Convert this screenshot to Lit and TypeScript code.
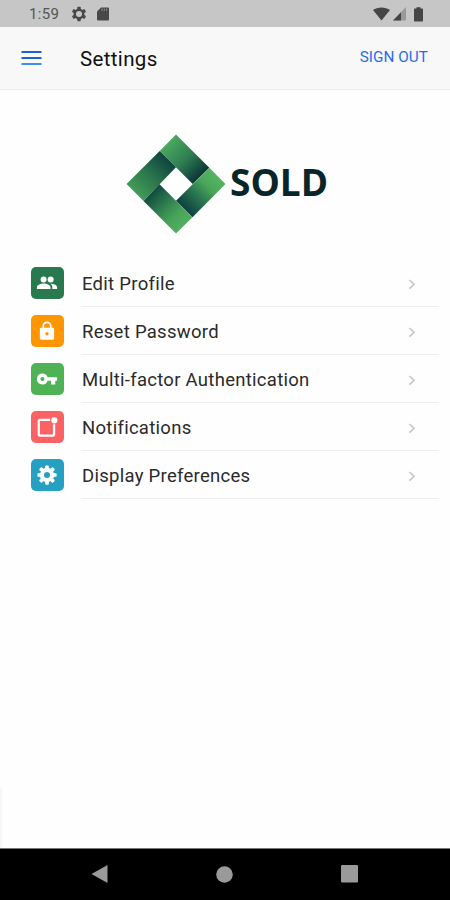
import { LitElement, html, css, svg } from "lit";
import { customElement } from "lit/decorators.js";

const teeth = (x: number, y: number, w: number, h: number, step: number) =>
  Array.from({ length: 360 / step }, (_, i) =>
    svg`<rect x="${x}" y="${y}" width="${w}" height="${h}" rx="1" transform="rotate(${i * step} 12 12)"/>`
  );

const icons = {
  people: svg`<path fill="#fff" d="M8.300 11.400a3.300 3.300 0 1 0 0-6.600 3.300 3.300 0 0 0 0 6.600zM16 11.400a3.300 3.300 0 1 0 0-6.600 3.300 3.300 0 0 0 0 6.600zM8.300 12.600c-2.500 0-7.300 1.300-7.300 4V18.600h14.800v-2c0-2.700-4.900-4-7.500-4zM15.800 12.700c1.300 1 2 2.300 2 3.900v2H23v-2c0-2.700-4.500-3.900-7.200-3.900z"/>`,
  lock: svg`<path fill="#fff" fill-rule="evenodd" d="M18.300 8.500H17V6.600a5 5 0 0 0-10 0v1.900H5.700A1.500 1.500 0 0 0 4.200 10v10A1.500 1.500 0 0 0 5.700 21.500h12.600a1.500 1.500 0 0 0 1.500-1.500V10A1.500 1.500 0 0 0 18.300 8.500zM8.900 8.500V6.600a3.100 3.100 0 0 1 6.200 0v1.900zM12 13.200a1.800 1.800 0 1 1 0 3.600 1.800 1.800 0 0 1 0-3.600z"/>`,
  key: svg`<path fill="#fff" fill-rule="evenodd" d="M12.650 10A6 6 0 0 0 7 6a6 6 0 1 0 5.650 8H16.500v4H21v-4h2v-4zM7 14.200a2.200 2.200 0 1 1 0-4.400 2.200 2.200 0 0 1 0 4.400z"/>`,
  badge: svg`<path fill="none" stroke="#fff" stroke-width="2.500" stroke-linejoin="round" d="M15.500 4.300H4.200a1.200 1.200 0 0 0-1.200 1.200v14.800a1.200 1.200 0 0 0 1.200 1.200h14.300a1.200 1.200 0 0 0 1.200-1.200V9"/><circle fill="#fff" cx="20" cy="4.700" r="3.400"/>`,
  gear: svg`<g fill="#fff"><path fill-rule="evenodd" d="M12 4.200a7.800 7.800 0 1 0 0 15.600 7.800 7.800 0 0 0 0-15.600zm0 4.500a3.300 3.300 0 1 1 0 6.600 3.300 3.300 0 0 1 0-6.600z"/>${teeth(10, 1.5, 4, 4.4, 45)}</g>`,
};

const rows = [
  { label: "Edit Profile", tone: "forest", icon: icons.people },
  { label: "Reset Password", tone: "orange", icon: icons.lock },
  { label: "Multi-factor Authentication", tone: "green", icon: icons.key },
  { label: "Notifications", tone: "coral", icon: icons.badge },
  { label: "Display Preferences", tone: "teal", icon: icons.gear },
];

@customElement("app-root")
export class AppRoot extends LitElement {
  static styles = css`
    :host {
      display: flex;
      flex-direction: column;
      height: 900px;
      width: 450px;
      position: relative;
      overflow: hidden;
      background: #fefefe;
      color: #111;
      font-family: Roboto, sans-serif;
    }
    * { box-sizing: border-box; }
    svg { display: block; flex: none; }
    .status {
      height: 27px;
      flex: none;
      display: flex;
      align-items: center;
      background: #c6c6c6;
      color: #555;
      padding: 1px 27px 0 29px;
    }
    .clock { font-size: 15px; width: 42px; letter-spacing: 0.3px; }
    .sd { margin-left: 10px; }
    .wifi { margin-left: auto; }
    .signal { margin-left: 3px; }
    .battery { margin-left: 8px; }
    .toolbar {
      height: 63px;
      flex: none;
      display: flex;
      align-items: center;
      padding: 0 22px 0 21px;
      background: #f8f8f8;
      border-bottom: 1px solid #ececec;
    }
    .title { margin: 2px 0 0 38px; font-size: 20.5px; font-weight: 400; letter-spacing: 0.35px; }
    .signout {
      margin: -2px 0 0 auto;
      padding: 0;
      border: 0;
      background: none;
      color: #2a6cea;
      font: 400 15.3px Roboto, sans-serif;
      letter-spacing: 0.05px;
    }
    .brand {
      height: 169px;
      flex: none;
      display: flex;
      padding: 44px 0 0 126px;
    }
    .name {
      margin: 21px 0 0 4px;
      font: 700 37px/54px "Open Sans", sans-serif;
      letter-spacing: 0;
      color: #08262a;
    }
    .list { margin: 0; padding: 0; list-style: none; }
    .row { display: flex; height: 48.1px; padding-left: 31px; }
    .tile {
      width: 32.5px;
      height: 32.5px;
      margin: 7.500px 17.500px 0 0;
      border-radius: 5px;
      display: grid;
      place-items: center;
      flex: none;
    }
    .forest { background: #28794e; }
    .orange { background: #ff9500; }
    .green { background: #4fb255; }
    .coral { background: #fb6264; }
    .teal { background: #25a0c1; }
    .body {
      flex: none;
      width: 358px;
      display: flex;
      align-items: center;
      justify-content: space-between;
      border-bottom: 1px solid #eee;
      padding: 2.5px 23px 0 1px;
    }
    .label { font-size: 18.5px; letter-spacing: 0.28px; color: #2a2a2a; }
    .edge {
      position: absolute;
      left: 0;
      top: 788px;
      width: 2px;
      height: 60px;
      background: #f7f7f7;
    }
    .nav {
      margin-top: auto;
      height: 52px;
      flex: none;
      display: flex;
      justify-content: space-between;
      align-items: center;
      padding: 0 92px 1px 91px;
      background: #000;
      border-top: 1px solid #777;
    }
  `;

  render() {
    return html`
      <div class="status">
        <span class="clock">1:59</span>
        <svg width="16" height="16" viewBox="0 0 24 24">
          <circle cx="12" cy="12" r="6.300" fill="none" stroke="#484848" stroke-width="3.600" />
          <g fill="#484848">${teeth(9.4, 1.2, 5.2, 5, 60)}</g>
        </svg>
        <svg class="sd" width="12" height="14" viewBox="0 0 12 14">
          <path fill="#484848" d="M4 .5h7a1 1 0 0 1 1 1v11a1 1 0 0 1-1 1H1a1 1 0 0 1-1-1V4.500z" />
          <path stroke="#8a8a8a" stroke-width="1" d="M5 1.500v2.500M7.300 1.500v2.500M9.600 1.500v2.500" />
        </svg>
        <svg class="wifi" width="17" height="14" viewBox="0 0 17 14">
          <path fill="#454545" d="M8.500 13.500 0 3C4.500-.4 12.500-.4 17 3z" />
        </svg>
        <svg class="signal" width="13" height="14" viewBox="0 0 13 14">
          <path fill="#999" d="M13 0v13.500H0z" />
          <path fill="#454545" d="M8 5.200v8.300H0z" />
        </svg>
        <svg class="battery" width="9" height="15" viewBox="0 0 9 15">
          <path fill="#454545" d="M2.500 .3h4V1.500h1.700a.8.8 0 0 1 .8.8v11.500a.8.8 0 0 1-.8.8H.8a.8.8 0 0 1-.8-.8v-11.500A.8.8 0 0 1 .8 1.500H2.500z" />
        </svg>
      </div>
      <div class="toolbar">
        <svg width="21" height="15" viewBox="0 0 21 15">
          <path fill="#1e5fe0" d="M.5 0h20v2H.5zM.5 6h20v2H.5z" />
          <path fill="#3c8cf5" d="M.5 12h20v2H.5z" />
        </svg>
        <div class="title">Settings</div>
        <button class="signout">SIGN OUT</button>
      </div>
      <div class="brand">
        <svg width="100" height="100" viewBox="0 0 100 100">
          <defs>
            <linearGradient id="ne" gradientUnits="userSpaceOnUse" x1="42" y1="9" x2="75" y2="42">
              <stop offset="0" stop-color="#4aa85c" /><stop offset=".5" stop-color="#2f8052" /><stop offset="1" stop-color="#0b3538" />
            </linearGradient>
            <linearGradient id="se" gradientUnits="userSpaceOnUse" x1="91" y1="42" x2="58" y2="75">
              <stop offset="0" stop-color="#54b560" /><stop offset=".3" stop-color="#4aa65a" /><stop offset=".6" stop-color="#297650" /><stop offset="1" stop-color="#0d3f40" />
            </linearGradient>
            <linearGradient id="sw" gradientUnits="userSpaceOnUse" x1="58" y1="91" x2="25" y2="58">
              <stop offset="0" stop-color="#50b05e" /><stop offset=".3" stop-color="#46a158" /><stop offset=".6" stop-color="#2f7d4f" /><stop offset="1" stop-color="#12483f" />
            </linearGradient>
            <linearGradient id="nw" gradientUnits="userSpaceOnUse" x1="9" y1="58" x2="42" y2="25">
              <stop offset="0" stop-color="#429c58" /><stop offset=".5" stop-color="#2a744c" /><stop offset="1" stop-color="#0e4340" />
            </linearGradient>
          </defs>
          <path fill="url(#ne)" d="M50 .5 83.300 33.700 66.700 50 33.700 17z" />
          <path fill="url(#se)" d="M99.500 50 66.500 83.300 50 66.800 83.300 33.700z" />
          <path fill="url(#sw)" d="M50 99.500 17.500 67 33.300 50 66.500 83.300z" />
          <path fill="url(#nw)" d="M.5 50 33.700 17 50 33.300 17.500 67z" />
        </svg>
        <div class="name">SOLD</div>
      </div>
      <ul class="list">
        ${rows.map(
          (r) => html`
            <li class="row">
              <div class="tile ${r.tone}"><svg width="22" height="22" viewBox="0 0 24 24">${r.icon}</svg></div>
              <div class="body">
                <span class="label">${r.label}</span>
                <svg width="8" height="12" viewBox="0 0 8 12">
                  <path fill="none" stroke="#c2c2c2" stroke-width="1.500" d="M1.500 2 6 6.300 1.500 10.600" />
                </svg>
              </div>
            </li>
          `
        )}
      </ul>
      <div class="edge"></div>
      <div class="nav">
        <svg width="17" height="18" viewBox="0 0 17 18"><path fill="#9a9a9a" d="M16.500 0v18L.5 9z" /></svg>
        <svg width="17" height="17" viewBox="0 0 17 17"><circle fill="#9a9a9a" cx="8.500" cy="8.500" r="8.300" /></svg>
        <svg width="17" height="18" viewBox="0 0 17 18"><rect fill="#9a9a9a" width="17" height="17.500" rx="1" /></svg>
      </div>
    `;
  }
}
